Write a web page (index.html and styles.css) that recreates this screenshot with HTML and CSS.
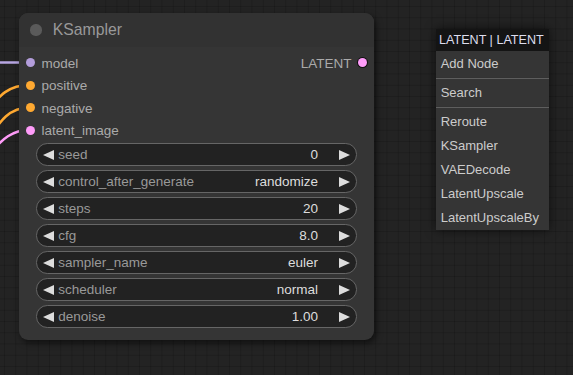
FILE: index.html
```html
<!DOCTYPE html>
<html>
<head>
<meta charset="utf-8">
<link rel="stylesheet" href="styles.css">
</head>
<body>
<div class="canvas">
  <svg class="wires" width="60" height="375" viewBox="0 0 60 375">
    <path d="M -5 62.5 L 30 62.5" stroke="#b7a6e2" stroke-width="2.5" fill="none"/>
    <path d="M -30 130 C -5 105, 0 85, 30 85" stroke="#ffa931" stroke-width="2.5" fill="none"/>
    <path d="M -30 165 C -5 135, 0 107.5, 30 107.5" stroke="#ffa931" stroke-width="2.5" fill="none"/>
    <path d="M -30 170 C -5 155, 0 130, 30 130" stroke="#ff9cf9" stroke-width="2.5" fill="none"/>
  </svg>

  <div class="node">
    <div class="node-title">
      <span class="title-dot"></span>
      <span class="title-text">KSampler</span>
    </div>
    <div class="slots">
      <div class="inputs">
        <div class="slot"><span class="dot dot-model"></span><span class="slot-label">model</span></div>
        <div class="slot"><span class="dot dot-cond"></span><span class="slot-label">positive</span></div>
        <div class="slot"><span class="dot dot-cond"></span><span class="slot-label">negative</span></div>
        <div class="slot"><span class="dot dot-latent"></span><span class="slot-label">latent_image</span></div>
      </div>
      <div class="outputs">
        <div class="slot slot-out"><span class="slot-label">LATENT</span><span class="dot dot-latent dot-out"></span></div>
      </div>
    </div>
    <div class="widgets">
      <div class="widget"><span class="arrow-l"></span><span class="w-label">seed</span><span class="w-value">0</span><span class="arrow-r"></span></div>
      <div class="widget"><span class="arrow-l"></span><span class="w-label">control_after_generate</span><span class="w-value">randomize</span><span class="arrow-r"></span></div>
      <div class="widget"><span class="arrow-l"></span><span class="w-label">steps</span><span class="w-value">20</span><span class="arrow-r"></span></div>
      <div class="widget"><span class="arrow-l"></span><span class="w-label">cfg</span><span class="w-value">8.0</span><span class="arrow-r"></span></div>
      <div class="widget"><span class="arrow-l"></span><span class="w-label">sampler_name</span><span class="w-value">euler</span><span class="arrow-r"></span></div>
      <div class="widget"><span class="arrow-l"></span><span class="w-label">scheduler</span><span class="w-value">normal</span><span class="arrow-r"></span></div>
      <div class="widget"><span class="arrow-l"></span><span class="w-label">denoise</span><span class="w-value">1.00</span><span class="arrow-r"></span></div>
    </div>
  </div>

  <div class="menu">
    <div class="menu-title">LATENT | LATENT</div>
    <div class="menu-body">
      <div class="menu-entry">Add Node</div>
      <div class="menu-sep"></div>
      <div class="menu-entry">Search</div>
      <div class="menu-sep"></div>
      <div class="menu-entry">Reroute</div>
      <div class="menu-entry">KSampler</div>
      <div class="menu-entry">VAEDecode</div>
      <div class="menu-entry">LatentUpscale</div>
      <div class="menu-entry">LatentUpscaleBy</div>
    </div>
  </div>
</div>
</body>
</html>
```

FILE: styles.css
```css
html, body {
  margin: 0;
  padding: 0;
}
body {
  width: 573px;
  height: 375px;
  overflow: hidden;
  background: #222;
  font-family: "Liberation Sans", Arial, sans-serif;
}
.canvas {
  position: relative;
  width: 573px;
  height: 375px;
  overflow: hidden;
  background-color: #232323;
  background-image:
    linear-gradient(to right, rgba(0,0,0,0.16) 1px, transparent 1px),
    linear-gradient(to bottom, rgba(0,0,0,0.16) 1px, transparent 1px);
  background-size: 11.25px 11.25px;
  background-position: 4px 6px;
}
.wires {
  position: absolute;
  left: 0;
  top: 0;
}
.node {
  position: absolute;
  left: 19px;
  top: 13px;
  width: 355px;
  height: 327px;
  box-sizing: border-box;
  background: #353535;
  border-radius: 9px;
  box-shadow: 2px 3px 6px rgba(0,0,0,0.55);
  display: flex;
  flex-direction: column;
}
.node-title {
  height: 33.75px;
  flex: none;
  display: flex;
  align-items: center;
  background: #323232;
  border-radius: 9px 9px 0 0;
  padding-left: 11.25px;
}
.title-dot {
  width: 11.25px;
  height: 11.25px;
  border-radius: 50%;
  background: #5a5a5a;
  flex: none;
}
.title-text {
  margin-left: 11.25px;
  font-size: 15.75px;
  color: #999;
}
.slots {
  display: flex;
  justify-content: space-between;
  padding-top: 4.5px;
}
.slot {
  height: 22.5px;
  display: flex;
  align-items: center;
  font-size: 13.5px;
  color: #aaa;
}
.slot-label {
  padding-top: 1.5px;
}
.dot {
  width: 9px;
  height: 9px;
  border-radius: 50%;
  flex: none;
  margin-left: 6.75px;
  margin-right: 6.75px;
}
.dot-model { background: #b39ddb; }
.dot-cond { background: #ffa931; }
.dot-latent { background: #ff9cf9; }
.dot-out {
  margin-left: 6.75px;
  margin-right: 6.75px;
  box-shadow: 0 0 0 1px #111;
}
.slot-out .slot-label {
  color: #aaa;
}
.widgets {
  display: flex;
  flex-direction: column;
  gap: 4.5px;
  padding: 0 16.9px;
  margin-top: 2px;
}
.widget {
  height: 22.5px;
  box-sizing: border-box;
  border: 1px solid #666;
  border-radius: 11.25px;
  background: #222;
  display: flex;
  align-items: center;
  padding: 0 5.75px;
  font-size: 13.5px;
}
.arrow-l {
  width: 0;
  height: 0;
  border-top: 5.6px solid transparent;
  border-bottom: 5.6px solid transparent;
  border-right: 11.25px solid #ddd;
  flex: none;
}
.arrow-r {
  width: 0;
  height: 0;
  border-top: 5.6px solid transparent;
  border-bottom: 5.6px solid transparent;
  border-left: 11.25px solid #ddd;
  flex: none;
}
.w-label {
  flex: 1;
  margin-left: 4.5px;
  color: #999;
  white-space: nowrap;
}
.w-value {
  color: #ddd;
  margin-right: 21.4px;
  white-space: nowrap;
}
.menu {
  position: absolute;
  left: 436px;
  top: 29px;
  width: 113px;
  background: #353535;
  box-shadow: 0 0 10px rgba(0,0,0,0.6);
}
.menu-title {
  height: 22px;
  line-height: 22px;
  background: #141414;
  color: #dde;
  font-size: 12.6px;
  padding-left: 3px;
  white-space: nowrap;
}
.menu-body {
  padding-top: 1px;
  padding-bottom: 0;
}
.menu-entry {
  height: 24px;
  line-height: 24px;
  padding-left: 4.7px;
  font-size: 13px;
  color: #ccc;
  white-space: nowrap;
}
.menu-sep {
  height: 0;
  border-top: 1px solid #333;
  border-bottom: 1px solid #5e5e5e;
  margin: 1px 0 2px 0;
}
```
